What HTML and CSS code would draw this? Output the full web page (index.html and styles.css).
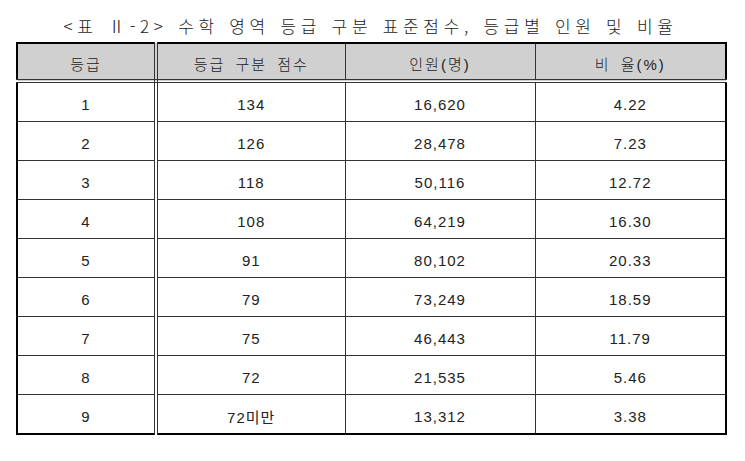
FILE: index.html
```html
<!DOCTYPE html>
<html lang="ko">
<head>
<meta charset="utf-8">
<title>수학 영역 등급 구분 표준점수</title>
<link rel="stylesheet" href="styles.css">
</head>
<body>
<div class="page">
  <div class="title">&lt;표 Ⅱ-2&gt; 수학 영역 등급 구분 표준점수, 등급별 인원 및 비율</div>
  <table class="grade-table">
    <colgroup>
      <col class="c1"><col class="c2"><col class="c3"><col class="c4">
    </colgroup>
    <thead>
      <tr><th class="first">등급</th><th>등급 구분 점수</th><th>인원(명)</th><th>비 율(%)</th></tr>
    </thead>
    <tbody>
      <tr><td class="first">1</td><td>134</td><td>16,620</td><td>4.22</td></tr>
      <tr><td class="first">2</td><td>126</td><td>28,478</td><td>7.23</td></tr>
      <tr><td class="first">3</td><td>118</td><td>50,116</td><td>12.72</td></tr>
      <tr><td class="first">4</td><td>108</td><td>64,219</td><td>16.30</td></tr>
      <tr><td class="first">5</td><td>91</td><td>80,102</td><td>20.33</td></tr>
      <tr><td class="first">6</td><td>79</td><td>73,249</td><td>18.59</td></tr>
      <tr><td class="first">7</td><td>75</td><td>46,443</td><td>11.79</td></tr>
      <tr><td class="first">8</td><td>72</td><td>21,535</td><td>5.46</td></tr>
      <tr><td class="first">9</td><td>72미만</td><td>13,312</td><td>3.38</td></tr>
    </tbody>
  </table>
</div>
</body>
</html>
```
FILE: styles.css
```css
html, body {
  margin: 0;
  padding: 0;
  background: #ffffff;
}
body {
  font-family: "Liberation Sans", "Noto Sans CJK KR", sans-serif;
  color: #222222;
}
.page {
  padding: 16px 0 0 16px;
  width: 709px;
}
.title {
  font-family: "Noto Sans CJK KR", sans-serif;
  font-weight: 300;
  font-size: 17px;
  line-height: 20px;
  letter-spacing: 4.7px;
  word-spacing: 1px;
  text-align: center;
  margin-bottom: 6px;
  white-space: nowrap;
  color: #1a1a1a;
}
.grade-table {
  width: 709px;
  border-collapse: collapse;
  table-layout: fixed;
  border: 2px solid #000000;
}
.c1 { width: 139px; }
.c2 { width: 189px; }
.c3 { width: 190px; }
.c4 { width: 191px; }
.grade-table th,
.grade-table td {
  border: 1px solid #333333;
  text-align: center;
  padding: 4px 0 0 0;
  font-size: 15px;
  letter-spacing: 1px;
  font-weight: normal;
}
.grade-table th {
  background: #d0d0d0;
  height: 31px;
  border-bottom: 4px double #333333;
  letter-spacing: 2px;
  word-spacing: 4px;
  font-weight: 300;
}
.grade-table td {
  height: 34px;
}
.grade-table .first {
  border-right: 4px double #333333;
}
```
